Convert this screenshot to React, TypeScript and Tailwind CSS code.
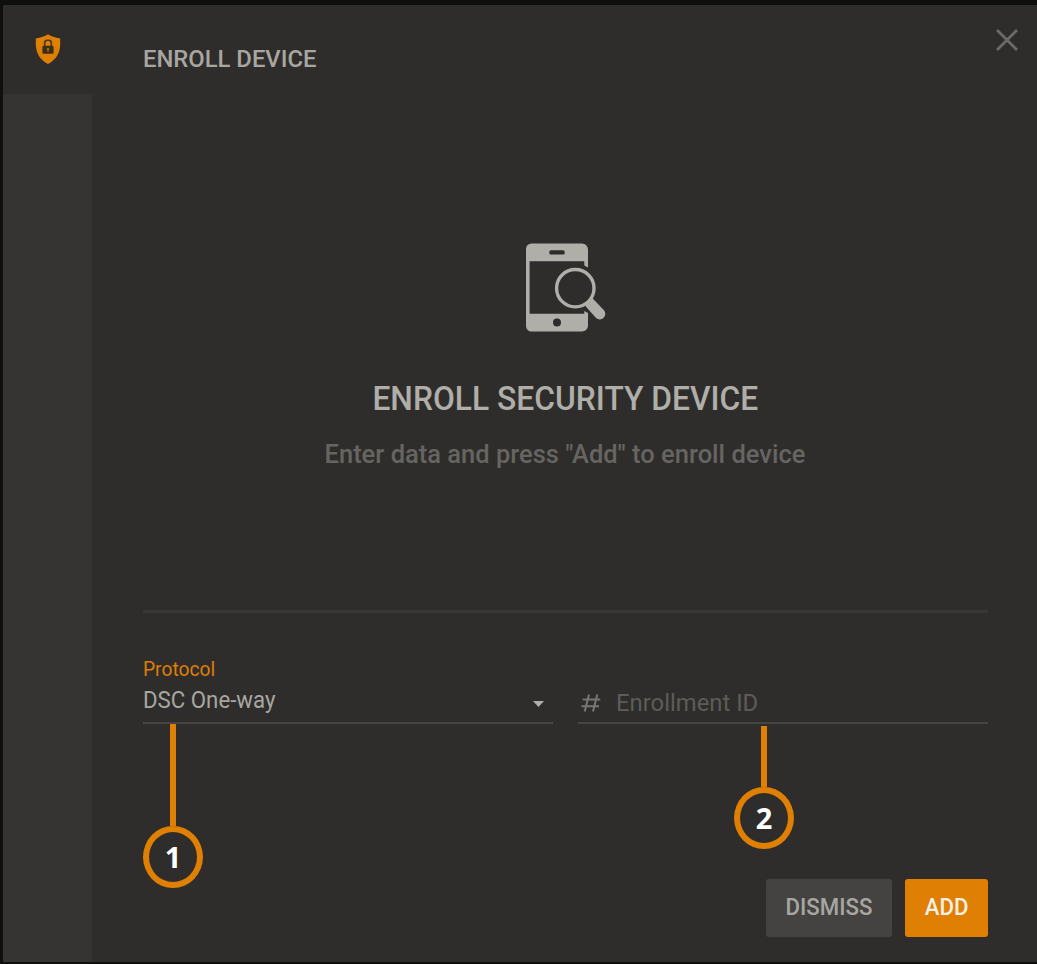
import type { ReactNode } from "react";

const ShieldLockIcon = () => (
  <svg className="h-[31px] w-[26px]" viewBox="0 0 26 31" fill="none">
    <path
      d="M13 0.3C9.8 2.4 5.8 3.7 0.8 4.5V10C0.8 19.5 5.6 26.2 13 30C20.4 26.2 25.2 19.5 25.2 10V4.5C20.2 3.7 16.2 2.4 13 0.3Z"
      fill="#df7f04"
    />
    <path d="M9.7 12.5V8.6a2.6 2.6 0 0 1 2.6-2.4h1.4a2.6 2.6 0 0 1 2.6 2.4V12.5" stroke="#4a3618" strokeWidth="1.6" />
    <rect x="7.4" y="11.8" width="11.2" height="8" rx="1.4" fill="#3a2e1c" />
    <path d="M12 14h2v1.6l-.4.6v1.6h-1.2v-1.6l-.4-.6z" fill="#b56a0c" />
  </svg>
);

const PhoneSearchIcon = () => (
  <svg className="h-[90px] w-[82px]" viewBox="0 0 82 90" fill="none">
    <path
      d="M6.5 1.5H57a6 6 0 0 1 6 6V25.5L59.3 23.4V19.2H4.6V71.8H59.3V69L63 71V83.5a6 6 0 0 1-6 6H6.5a5.5 5.5 0 0 1-5.5-5.5V7a5.5 5.5 0 0 1 5.5-5.5Z"
      fill="#b0aea9"
    />
    <rect x="24.3" y="8.3" width="15.4" height="4.2" rx="1.6" fill="#2e2d2b" />
    <circle cx="32" cy="80.5" r="4" fill="#2e2d2b" />
    <circle cx="50.3" cy="46.2" r="18.7" stroke="#b0aea9" strokeWidth="3.4" />
    <path
      d="M59.5 62.9Q64.5 60.8 67 55.8L79 68.2A5.6 5.6 0 0 1 71 76Z"
      fill="#b0aea9"
    />
  </svg>
);

const CloseIcon = () => (
  <svg className="h-[22px] w-[22px]" viewBox="0 0 22 22" fill="none">
    <path d="M1 1L21 21M21 1L1 21" stroke="#6b6a67" strokeWidth="2.8" />
  </svg>
);

const HashIcon = () => (
  <svg className="h-[18px] w-[20px]" viewBox="0 0 20 18" fill="none">
    <path
      d="M8 .5L3.7 17.5M16.3 .5L12 17.5M1.7 5.6H19.3M.5 12.2H18"
      stroke="#777673"
      strokeWidth="2"
    />
  </svg>
);

type CalloutProps = {
  className: string;
  lineClassName: string;
  children: ReactNode;
};

const Callout = ({ className, lineClassName, children }: CalloutProps) => (
  <div className={`absolute flex w-[60px] flex-col items-center ${className}`}>
    <div className={`w-[6px] bg-[#df7f04] ${lineClassName}`} />
    <div className="flex h-[62px] w-[60px] items-center justify-center rounded-[50%] border-[6px] border-[#df7f04] pb-[2px] font-['Open_Sans',sans-serif] text-[29px] leading-none font-bold text-white">
      {children}
    </div>
  </div>
);

const App = () => {
  return (
    <div className="h-[964px] w-[1037px] overflow-hidden bg-[#0f0f0e] pt-[5px] pb-[2px] pl-[3px] font-[Roboto,sans-serif]">
      <div className="flex h-full bg-[#2e2d2b]">
        <aside className="flex w-[89px] shrink-0 flex-col">
          <div className="flex h-[89px] justify-center pt-[29px]">
            <ShieldLockIcon />
          </div>
          <div className="flex-1 rounded-bl-[3px] bg-[#353432]" />
        </aside>

        <main className="flex flex-1 flex-col pr-[49px] pl-[51px]">
          <header className="flex h-[89px] items-start justify-between">
            <h1 className="origin-left scale-x-[0.992] pt-[40px] text-[24px] leading-[28px] font-medium whitespace-nowrap text-[#a8a6a1]">
              ENROLL DEVICE
            </h1>
            <button className="-mr-[30px] pt-[24px]" aria-label="Close">
              <CloseIcon />
            </button>
          </header>

          <section className="flex h-[516px] flex-col items-center pt-[148px]">
            <PhoneSearchIcon />
            <h2 className="mt-[46px] scale-x-[0.935] text-[34px] leading-[40px] font-medium whitespace-nowrap text-[#b0aea9]">
              ENROLL SECURITY DEVICE
            </h2>
            <p className="mt-[21px] mr-px text-[25.5px] leading-[30px] font-medium whitespace-nowrap text-[#666562]">
              Enter data and press "Add" to enroll device
            </p>
          </section>

          <div className="h-[3px] bg-[#383735]" />

          <form className="mt-[43px] grid h-[68px] grid-cols-[410px_410px] gap-[25px]">
            <div className="relative flex flex-col border-b-2 border-[#464543]">
              <label className="origin-left scale-x-[0.96] text-[20px] leading-[26px] text-[#df7f04]">
                Protocol
              </label>
              <div className="flex items-center justify-between pr-[9px]">
                <span className="origin-left scale-x-[0.927] text-[24px] leading-[36px] text-[#a8a6a1]">
                  DSC One-way
                </span>
                <svg className="mt-[7px] h-[6px] w-[11px]" viewBox="0 0 11 6">
                  <path d="M0 0H11L5.5 6Z" fill="#b0aea9" />
                </svg>
              </div>
              <Callout className="top-[68px] left-0" lineClassName="h-[102px]">
                1
              </Callout>
            </div>
            <div className="relative flex items-end border-b-2 border-[#464543] pl-[3px]">
              <div className="flex h-[38px] items-center">
                <HashIcon />
                <span className="ml-[15px] origin-left scale-x-[0.993] text-[24px] leading-[36px] text-[#5d5c59]">
                  Enrollment ID
                </span>
              </div>
              <Callout className="top-[70px] left-[156px]" lineClassName="h-[61px]">
                2
              </Callout>
            </div>
          </form>

          <footer className="mt-auto mb-[25px] flex justify-end gap-[13px]">
            <button
              type="button"
              className="h-[58px] w-[126px] rounded-[3px] bg-[#444341] pb-[3px] text-[24px] font-medium text-[#a8a6a1]"
            >
              <span className="inline-block scale-x-[0.925]">DISMISS</span>
            </button>
            <button
              type="button"
              className="h-[58px] w-[83px] rounded-[3px] bg-[#df7f04] pb-[3px] text-[24px] font-medium text-[#f5efe6]"
            >
              <span className="inline-block scale-x-[0.925]">ADD</span>
            </button>
          </footer>
        </main>
      </div>
    </div>
  );
};

export default App;
